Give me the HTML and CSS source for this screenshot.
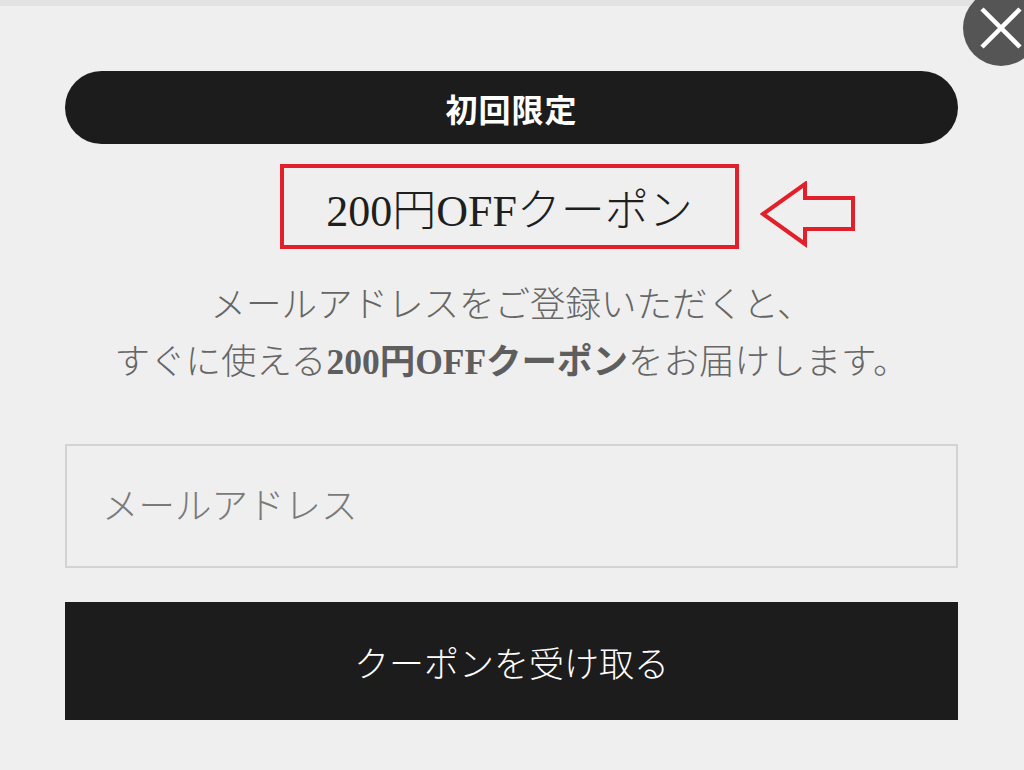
FILE: index.html
```html
<!DOCTYPE html>
<html lang="ja">
<head>
<meta charset="utf-8">
<title>初回限定クーポン</title>
<link rel="stylesheet" href="styles.css">
</head>
<body>
<div class="topbar"></div>
<div class="modal">
  <button class="close" aria-label="閉じる">
    <svg width="76" height="76" viewBox="0 0 76 76">
      <circle cx="38" cy="38" r="38" fill="#555555"/>
      <path d="M19 19 L57 57 M57 19 L19 57" stroke="#ffffff" stroke-width="4.5" stroke-linecap="butt"/>
    </svg>
  </button>
  <div class="pill">初回限定</div>
  <div class="headline-row">
    <div class="headline">200円OFFクーポン
      <svg class="arrow" width="100" height="70" viewBox="0 0 100 70">
        <path d="M3 33 L45 3 L45 17 L93 17 L93 48 L45 48 L45 63 Z" fill="none" stroke="#e3202a" stroke-width="4" stroke-linejoin="miter"/>
      </svg>
    </div>
  </div>
  <p class="lead">メールアドレスをご登録いただくと、<br>すぐに使える<strong>200円OFFクーポン</strong>をお届けします。</p>
  <input class="email" type="email" placeholder="メールアドレス">
  <button class="submit">クーポンを受け取る</button>
</div>
</body>
</html>
```

FILE: styles.css
```css
html, body {
  margin: 0;
  padding: 0;
  background: #efefef;
}
body {
  font-family: "Liberation Serif", "Noto Sans CJK JP", serif;
  width: 1024px;
  height: 770px;
  overflow: hidden;
  position: relative;
}
.topbar {
  height: 6px;
  background: #e3e3e3;
}
.modal {
  padding: 65px 66px 0 65px;
  display: flex;
  flex-direction: column;
}
.close {
  position: absolute;
  left: 963px;
  top: -10px;
  width: 76px;
  height: 76px;
  padding: 0;
  border: 0;
  background: transparent;
  cursor: pointer;
}
.close svg { display: block; }
.pill {
  height: 73px;
  border-radius: 37px;
  background: #1c1c1c;
  color: #ffffff;
  display: flex;
  align-items: center;
  justify-content: center;
  font-size: 32px;
  font-weight: 700;
  letter-spacing: 1px;
}
.headline-row {
  display: flex;
  justify-content: center;
  margin-top: 20px;
}
.headline {
  position: relative;
  width: 451px;
  height: 77px;
  border: 4px solid #e3202a;
  display: flex;
  align-items: center;
  justify-content: center;
  font-size: 44px;
  font-weight: 300;
  color: #1e1e1e;
  margin-left: -4px;
}
.arrow {
  position: absolute;
  left: calc(100% + 25px);
  top: 13px;
}
.lead {
  margin: 28px 0 0;
  text-align: center;
  font-size: 35.5px;
  line-height: 57px;
  color: #666666;
  font-weight: 300;
}
.lead strong {
  font-weight: 700;
  color: #5e5e5e;
}
.email {
  margin-top: 53px;
  box-sizing: border-box;
  height: 124px;
  width: 100%;
  border: 2px solid #d3d3d3;
  background: #efefef;
  padding: 0 0 0 35px;
  font-family: "Liberation Serif", "Noto Sans CJK JP", serif;
  font-size: 36.5px;
  font-weight: 300;
  color: #555;
  outline: none;
}
.email::placeholder {
  color: #7a7a7a;
}
.submit {
  margin-top: 34px;
  height: 118px;
  width: 100%;
  border: 0;
  background: #1c1c1c;
  color: #ffffff;
  font-family: "Liberation Serif", "Noto Sans CJK JP", serif;
  font-size: 35px;
  font-weight: 300;
  cursor: pointer;
}
```
